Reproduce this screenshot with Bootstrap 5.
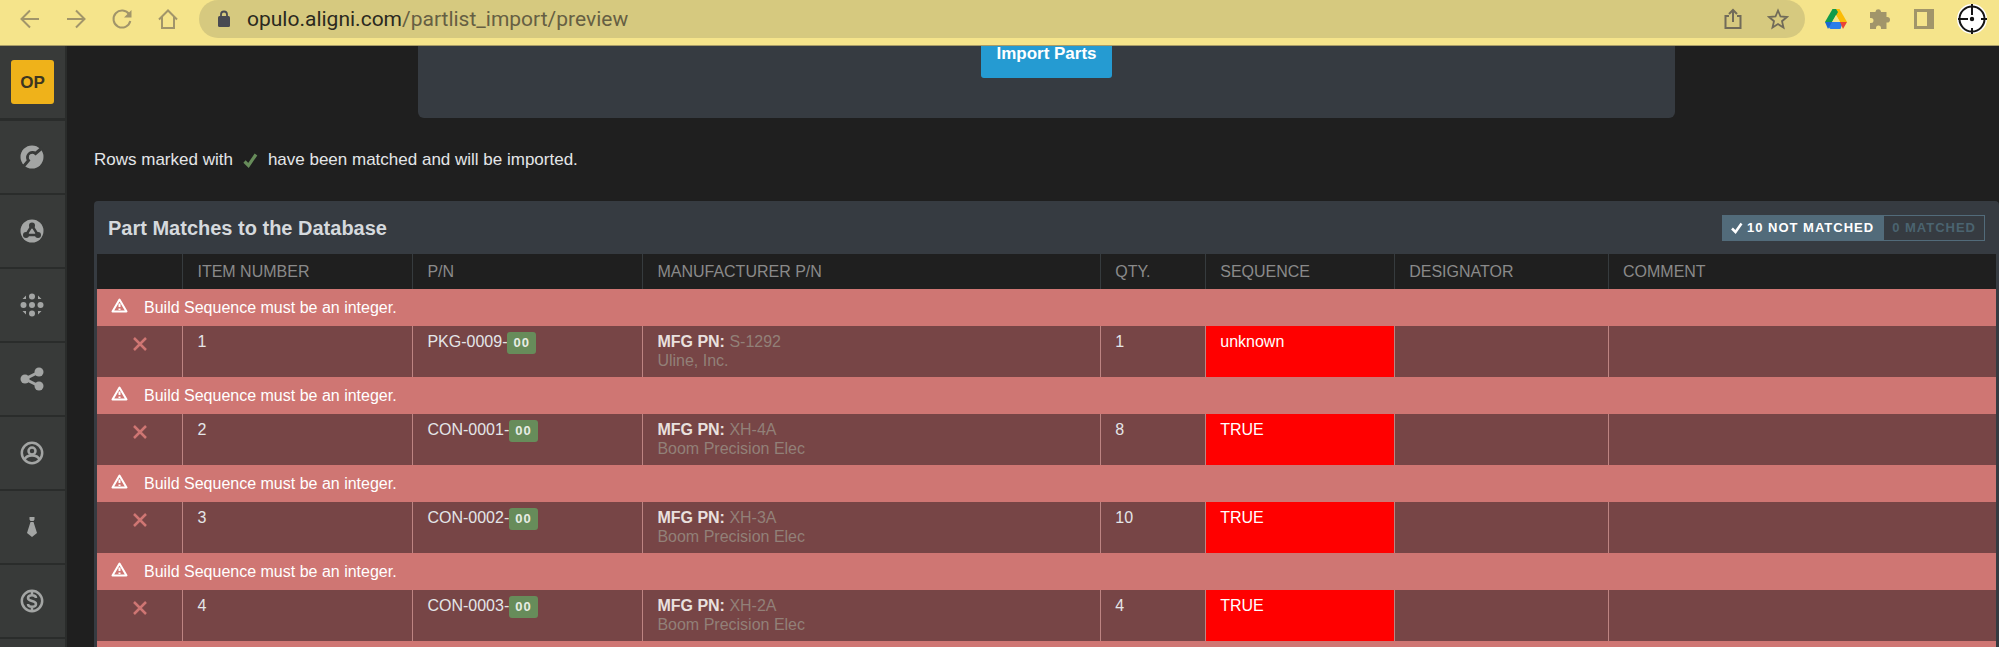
<!DOCTYPE html>
<html lang="en">
<head>
<meta charset="utf-8">
<meta name="viewport" content="width=device-width, initial-scale=1">
<title>Part list import preview</title>
<link href="https://cdn.jsdelivr.net/npm/bootstrap@5.3.0/dist/css/bootstrap.min.css" rel="stylesheet">
<style>
  body { background: #1f1f1f; color: #e4e6e8; font-family: "Liberation Sans", Arial, sans-serif; font-size: 16px; line-height: 19px; }
  .shell { height: 100vh; overflow: hidden; }
  svg { display: block; flex: none; }

  .browser-bar { background: #f5e48b; border-bottom: 1px solid #a89c68; height: 46px; padding: 0 12px 8px 19px; gap: 20px; color: #a1956a; }
  .tool { border: 0; background: none; padding: 0; color: inherit; }
  .nav-tools { gap: 24px; }
  .ext-tools { gap: 22px; }
  .address { background: #d6c97f; border-radius: 19px; height: 38px; padding: 0 16px 0 18px; gap: 16px; color: #716b59; }
  .address .url { font-family: Roboto, sans-serif; font-size: 21px; line-height: 24px; color: #665f43; white-space: nowrap; }
  .address .url b { font-weight: 400; color: #2b2920; }

  .side { width: 67px; background: #383a39; border-right: 2px solid #2a2c2b; color: #a3a5a4; }
  .side a { height: 74px; border-bottom: 2px solid #2a2c2b; color: inherit; padding-right: 2px; }
  .side .org { height: 75px; border-bottom-width: 3px; padding-right: 0; }
  .org span { background: #efb21a; color: #3d3620; width: 43px; height: 44px; border-radius: 3px; font-size: 17px; font-weight: 700; }

  .page { padding-left: 27px; }
  .import-panel { background: #363b41; border-radius: 0 0 6px 6px; height: 72px; width: 1260px; max-width: 66%; }
  .btn-import { background: #259bd2; color: #fff; border: 0; border-radius: 0 0 3px 3px; font-size: 17px; font-weight: 700; line-height: 16px; height: 32px; padding: 0 15px 16px; }
  .btn-import:hover { background: #1f8abd; color: #fff; }
  .note { font-size: 17px; line-height: 20px; margin: 32px 0 31px; gap: 10px; }

  .matches { background: #363b41; border-radius: 4px 4px 0 0; padding: 0 3px; }
  .matches-head { height: 53px; padding: 0 11px; }
  .matches-head h2 { font-size: 20px; line-height: 24px; font-weight: 700; color: #d5d9dd; }
  .toggle { border: 1px solid #526b7a; border-radius: 0; height: 26px; font-size: 13px; font-weight: 700; letter-spacing: 1px; line-height: 16px; padding: 0 8px; color: #4b6470; background: none; }
  .toggle.on { background: #526b7a; color: #fff; }

  .parts { table-layout: fixed; width: 100%; border-collapse: separate; border-spacing: 0; }
  .parts th { background: #1f1f1f; color: #8a8a8a; font-weight: 400; height: 35px; padding: 0 14px; border-left: 1px solid #363b3e; text-transform: uppercase; }
  .parts .issue td { background: #cf7673; color: #fff; height: 37px; padding: 0 14px; }
  .issue div { gap: 16px; }
  .parts .item td { background: #774546; height: 51px; padding: 6px 14px; vertical-align: top; border-left: 1px solid #bd8482; }
  .parts .item td.bad { background: #f00; color: #fff; }
  .parts th:first-child, .parts .item td:first-child { border-left: 0; }
  .item strong { color: #e9e0de; }
  .muted { color: #928078; }
  .rev { background: #678c5a; color: #e7ece4; border-radius: 3px; font-size: 13px; font-weight: 700; letter-spacing: 1px; line-height: 22px; padding: 0 6px; }
  .cross { color: #cf7673; margin: 5px auto 0; }
</style>
</head>
<body>
<div class="shell d-flex flex-column">
  <header class="browser-bar d-flex align-items-center flex-shrink-0">
    <nav class="nav-tools d-flex align-items-center" aria-label="Browser">
      <button class="tool" aria-label="Back"><svg width="22" height="22" viewBox="0 0 22 22" fill="none" stroke="currentColor" stroke-width="2"><path d="M20 11H3M11 2.500l-8.500 8.500 8.500 8.500"/></svg></button>
      <button class="tool" aria-label="Forward"><svg width="22" height="22" viewBox="0 0 22 22" fill="none" stroke="currentColor" stroke-width="2"><path d="M2 11h17M11 2.500l8.500 8.500-8.500 8.500"/></svg></button>
      <button class="tool" aria-label="Reload"><svg width="22" height="22" viewBox="0 0 22 22" fill="none" stroke="currentColor" stroke-width="2"><path d="M18.200 6.500A8.500 8.500 0 1 0 19.300 13"/><path d="M20.500 2v7.500H13z" fill="currentColor" stroke="none"/></svg></button>
      <button class="tool" aria-label="Home"><svg width="22" height="22" viewBox="0 0 22 22" fill="none" stroke="currentColor" stroke-width="2"><path d="M2 11.500L11 2.500l9 9M5 9v11h12V9"/></svg></button>
    </nav>
    <div class="address d-flex align-items-center flex-grow-1">
      <svg width="14" height="18" viewBox="0 0 14 18"><rect x="1" y="6" width="12" height="11" rx="1.500" fill="#494a52"/><path d="M4 7V4.500a3 3 0 0 1 6 0V7" fill="none" stroke="#494a52" stroke-width="1.800"/></svg>
      <div class="url flex-grow-1"><b>opulo.aligni.com</b>/partlist_import/preview</div>
      <button class="tool" aria-label="Share"><svg width="20" height="22" viewBox="0 0 20 22" fill="none" stroke="currentColor" stroke-width="2"><path d="M6 8H2.500v12h15V8H14M10 14V2.500M6 6l4-4 4 4"/></svg></button>
      <button class="tool ms-2" aria-label="Bookmark"><svg width="22" height="22" viewBox="0 0 22 22" fill="none" stroke="currentColor" stroke-width="1.800"><path d="M11 2.500l2.500 6 6.400.500-4.900 4.200 1.500 6.300L11 16.100l-5.500 3.400L7 13.200 2.100 9l6.400-.500z"/></svg></button>
    </div>
    <div class="ext-tools d-flex align-items-center">
      <button class="tool" aria-label="Drive"><svg width="22" height="20" viewBox="0 0 22 20"><path d="M7.500 0h7L22 13h-7z" fill="#fbbc05"/><path d="M7.500 0H11L13 3 5 17 0 13z" fill="#109b4b"/><path d="M11 6l4 7H7z" fill="#f5e48b"/><path d="M3.500 13H18l-2.500 7h-10L3 18z" fill="#2b7de9"/><path d="M0 13h7l-4 7z" fill="#1967d2"/><path d="M15 13h7l-4 7z" fill="#ea4335"/></svg></button>
      <button class="tool" aria-label="Extensions"><svg width="22" height="22" viewBox="0 0 22 22" fill="currentColor"><path d="M6.500 4V3.500a2.800 2.800 0 0 1 5.500 0V4h5.500v5h.700a2.800 2.800 0 0 1 0 5.600h-.700V21H12v-1a2.500 2.500 0 0 0-5 0v1H1v-6h1a2.500 2.500 0 0 0 0-5H1V4z"/></svg></button>
      <button class="tool" aria-label="Side panel"><svg width="22" height="20" viewBox="0 0 22 20"><path d="M1 0h20v20H1zM4 3v14h10V3z" fill="currentColor" fill-rule="evenodd"/></svg></button>
      <button class="tool" aria-label="Profile"><svg width="30" height="30" viewBox="0 0 30 30"><circle cx="15" cy="15" r="15" fill="#fff"/><g fill="none" stroke="#151515" stroke-width="2"><circle cx="15" cy="15" r="12.500"/><path d="M15 0v11M15 24v6M1 15h10M24 15h6M13 15h4M15 13v4"/></g><circle cx="15" cy="15" r="2.200" fill="#151515"/></svg></button>
    </div>
  </header>

  <div class="d-flex flex-grow-1" style="min-height:0">
    <nav class="side flex-shrink-0 overflow-hidden" aria-label="Main">
      <a href="#" class="org d-flex align-items-center justify-content-center text-decoration-none"><span class="d-flex align-items-center justify-content-center">OP</span></a>
      <a href="#" class="d-flex align-items-center justify-content-center" aria-label="Parts"><svg width="24" height="24" viewBox="0 0 24 24"><circle cx="12" cy="12" r="11.500" fill="currentColor"/><path d="M3 22L8.500 15.500A5 5 0 0 1 15.500 8.500L22 3" fill="none" stroke="#383a39" stroke-width="3"/><circle cx="12" cy="12" r="3" fill="currentColor"/></svg></a>
      <a href="#" class="d-flex align-items-center justify-content-center" aria-label="Assemblies"><svg width="24" height="24" viewBox="0 0 24 24"><circle cx="12" cy="12" r="11.500" fill="currentColor"/><path d="M12 6.500L6 16h12z" fill="none" stroke="#383a39" stroke-width="2.500"/><g fill="#383a39"><circle cx="12" cy="6.500" r="3"/><circle cx="6" cy="16" r="3"/><circle cx="18" cy="16" r="3"/></g></svg></a>
      <a href="#" class="d-flex align-items-center justify-content-center" aria-label="Inventory"><svg width="24" height="24" viewBox="0 0 24 24" fill="currentColor"><circle cx="12" cy="12" r="3"/><circle cx="12" cy="3.500" r="3"/><circle cx="12" cy="20.500" r="3"/><circle cx="3.500" cy="12" r="3"/><circle cx="20.500" cy="12" r="3"/><path d="M6 2.500v3.500H2.500zM18 2.500v3.500h3.500zM6 21.500V18H2.500zM18 21.500V18h3.500z"/></svg></a>
      <a href="#" class="d-flex align-items-center justify-content-center" aria-label="Share"><svg width="24" height="24" viewBox="0 0 24 24" fill="currentColor"><path d="M19 5L5 12l14 7" fill="none" stroke="currentColor" stroke-width="3"/><circle cx="5" cy="12" r="4.500"/><circle cx="19" cy="5" r="4.500"/><circle cx="19" cy="19" r="4.500"/></svg></a>
      <a href="#" class="d-flex align-items-center justify-content-center" aria-label="Contacts"><svg width="24" height="24" viewBox="0 0 24 24" fill="none" stroke="currentColor" stroke-width="2.500"><circle cx="12" cy="12" r="10.200"/><circle cx="12" cy="10" r="3.500"/><path d="M4.500 19c1-3.500 4-4.500 7.500-4.500s6.500 1 7.500 4.500"/></svg></a>
      <a href="#" class="d-flex align-items-center justify-content-center" aria-label="Employees"><svg width="24" height="24" viewBox="0 0 24 24" fill="currentColor"><path d="M9.500 2h5v2.500l-1 1.500h-3l-1-1.500zM10.500 7h3L17 18l-5 4-5-4z"/></svg></a>
      <a href="#" class="d-flex align-items-center justify-content-center" aria-label="Costs"><svg width="24" height="24" viewBox="0 0 24 24" fill="none" stroke="currentColor" stroke-width="2.500"><circle cx="12" cy="12" r="10.200"/><path d="M16 9c0-2-2-2.800-4-2.800S8 7 8 9c0 4 8 2 8 6 0 2-2 2.800-4 2.800S8 17 8 15M12 3v3M12 18v3"/></svg></a>
    </nav>

    <main class="page flex-grow-1 overflow-hidden">
      <section class="import-panel mx-auto d-flex justify-content-center align-items-start">
        <button class="btn btn-import">Import Parts</button>
      </section>
      <p class="note d-flex align-items-center">Rows marked with
        <svg width="15" height="15" viewBox="0 0 15 15" fill="none" stroke="#678c5a" stroke-width="3.200"><path d="M1.500 8.500L5.500 12.500 13 1.500"/></svg>
        have been matched and will be imported.</p>

      <section class="matches">
        <div class="matches-head d-flex align-items-center justify-content-between">
          <h2 class="m-0">Part Matches to the Database</h2>
          <div class="d-flex">
            <button class="toggle on d-flex align-items-center gap-1"><svg width="12" height="12" viewBox="0 0 12 12" fill="none" stroke="#fff" stroke-width="2.500"><path d="M1 6.500L4.500 10 10.500 1.500"/></svg>10 NOT MATCHED</button>
            <button class="toggle">0 MATCHED</button>
          </div>
        </div>
        <table class="parts">
          <colgroup><col style="width:4.500%"><col style="width:12.110%"><col style="width:12.110%"><col style="width:24.110%"><col style="width:5.530%"><col style="width:9.950%"><col style="width:11.260%"><col></colgroup>
          <thead><tr><th></th><th>Item Number</th><th>P/N</th><th>Manufacturer P/N</th><th>Qty.</th><th>Sequence</th><th>Designator</th><th>Comment</th></tr></thead>
          <tbody id="rows"></tbody>
        </table>
      </section>
    </main>
  </div>
</div>
<script src="https://cdn.jsdelivr.net/npm/bootstrap@5.3.0/dist/js/bootstrap.bundle.min.js"></script>
<script>
  const parts = [
    ["PKG-0009-", "S-1292", "Uline, Inc.", 1, "unknown"],
    ["CON-0001-", "XH-4A", "Boom Precision Elec", 8, "TRUE"],
    ["CON-0002-", "XH-3A", "Boom Precision Elec", 10, "TRUE"],
    ["CON-0003-", "XH-2A", "Boom Precision Elec", 4, "TRUE"]
  ];
  const icon = `<svg class="mb-1" width="17" height="15" viewBox="0 0 17 15" fill="none" stroke="#fff" stroke-width="2" stroke-linejoin="round"><path d="M8.500 1.500L15.500 13.500H1.500z"/><path d="M8.500 5.500v3.500M8.500 10.500v1.500"/></svg>`;
  const issue = text => `<tr class="issue"><td colspan="8"><div class="d-flex align-items-center">${text}</div></td></tr>`;
  document.getElementById("rows").innerHTML = parts.map(([pn, mfg, maker, qty, seq], i) => `${issue(icon + "Build Sequence must be an integer.")}
    <tr class="item"><td><svg class="cross" width="14" height="14" viewBox="0 0 14 14" fill="none" stroke="currentColor" stroke-width="2.500"><path d="M1 1l12 12M13 1L1 13"/></svg></td>
    <td>${i + 1}</td><td><span class="d-flex">${pn}<span class="rev">00</span></span></td>
    <td><strong>MFG PN:</strong> <span class="muted">${mfg}<br>${maker}</span></td>
    <td>${qty}</td><td class="bad">${seq}</td><td></td><td></td></tr>`).join("") + issue("");
</script>
</body>
</html>
